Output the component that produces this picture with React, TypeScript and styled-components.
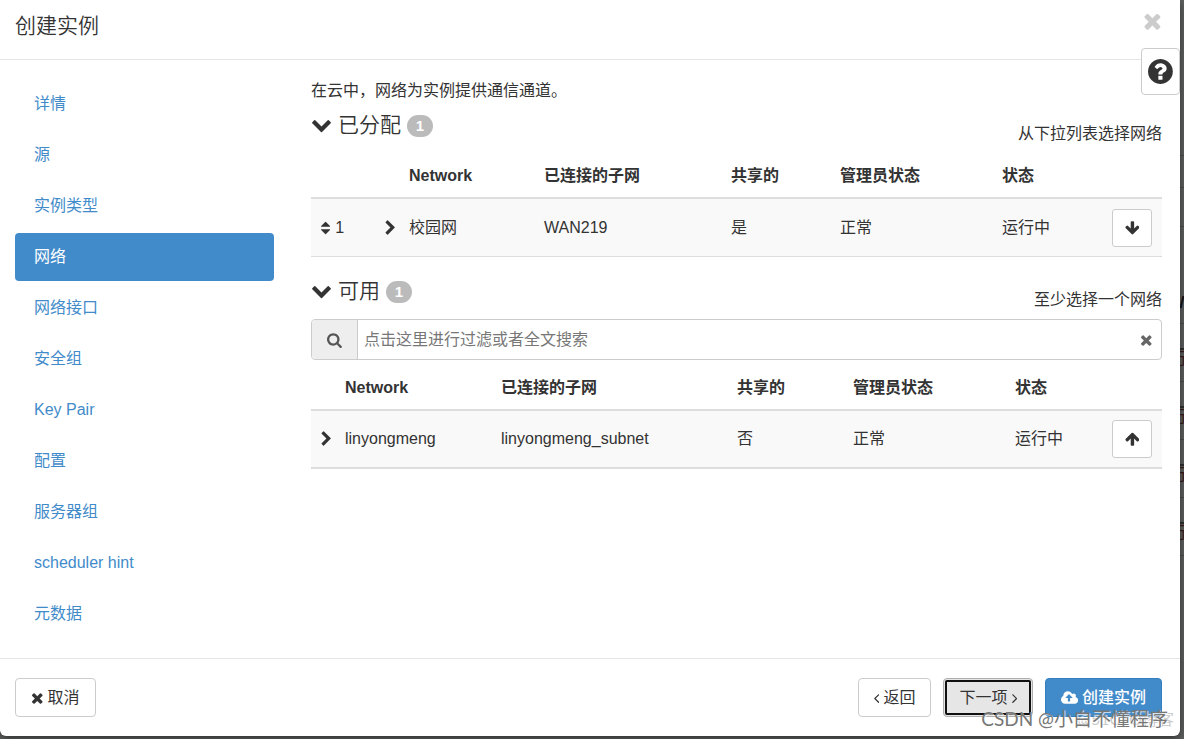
import React from "react";
import styled, { createGlobalStyle, css } from "styled-components";

const GlobalStyle = createGlobalStyle`
  *, *::before, *::after { box-sizing: border-box; }
  body {
    margin: 0;
    background: #5f6060;
    color: #333;
    font: 16px/22px "Liberation Sans", "Noto Sans CJK SC", sans-serif;
    overflow: hidden;
  }
  button, input { font: inherit; color: inherit; }
`;

/* ---------- icons ---------- */

const glyphs = {
  times: {
    box: "192 0 1408 1792",
    d: "M1490 1322q0 40-28 68l-136 136q-28 28-68 28t-68-28l-294-294-294 294q-28 28-68 28t-68-28l-136-136q-28-28-28-68t28-68l294-294-294-294q-28-28-28-68t28-68l136-136q28-28 68-28t68 28l294 294 294-294q28-28 68-28t68 28l136 136q28 28 28 68t-28 68l-294 294 294 294q28 28 28 68z",
  },
  chevronDown: {
    box: "0 96 1792 1792",
    d: "M1683 808l-742 741q-19 19-45 19t-45-19l-742-741q-19-19-19-45.500t19-45.500l166-165q19-19 45-19t45 19l531 531 531-531q19-19 45-19t45 19l166 165q19 19 19 45.500t-19 45.500z",
  },
  chevronRight: {
    box: "288 0 1120 1792",
    d: "M1363 877l-742 742q-19 19-45 19t-45-19l-166-166q-19-19-19-45t19-45l531-531-531-531q-19-19-19-45t19-45l166-166q19-19 45-19t45 19l742 742q19 19 19 45t-19 45z",
  },
  search: {
    box: "64 0 1664 1792",
    d: "M1216 832q0-185-131.500-316.500t-316.500-131.500-316.500 131.500-131.500 316.500 131.500 316.500 316.500 131.500 316.500-131.500 131.500-316.500zm512 832q0 52-38 90t-90 38q-54 0-90-38l-343-342q-179 124-399 124-143 0-273.500-55.500t-225-150-150-225-55.500-273.500 55.500-273.500 150-225 225-150 273.500-55.500 273.500 55.500 225 150 150 225 55.500 273.500q0 220-124 399l343 343q37 37 37 90z",
  },
  question: {
    box: "128 0 1536 1792",
    d: "M1024 1376v-192q0-14-9-23t-23-9h-192q-14 0-23 9t-9 23v192q0 14 9 23t23 9h192q14 0 23-9t9-23zm256-672q0-88-55.500-163t-138.500-116-170-41q-243 0-371 213-15 24 8 42l132 100q7 6 19 6 16 0 25-12 53-68 86-92 34-24 86-24 48 0 85.500 26t37.500 59q0 38-20 61t-68 45q-63 28-115.500 86.500t-52.500 125.500v36q0 14 9 23t23 9h192q14 0 23-9t9-23q0-19 21.500-49.500t54.500-49.500q32-18 49-28.500t46-35 44.500-48 28-60.500 12.500-81zm384 192q0 209-103 385.500t-279.500 279.500-385.500 103-385.500-103-279.500-279.500-103-385.500 103-385.500 279.500-279.500 385.500-103 385.500 103 279.500 279.500 103 385.500z",
  },
  arrowDown: {
    box: "64 0 1664 1792",
    d: "M1675 832q0 53-37 90l-651 652q-39 37-91 37-53 0-90-37l-651-652q-38-36-38-90 0-53 38-91l74-75q39-37 91-37 53 0 90 37l294 294v-704q0-52 38-90t90-38h128q52 0 90 38t38 90v704l294-294q37-37 90-37 52 0 91 37l75 75q37 39 37 91z",
  },
  arrowUp: {
    box: "64 0 1664 1792",
    d: "M1675 971q0 51-37 90l-75 75q-38 38-91 38-54 0-90-38l-294-293v704q0 52-37.500 84.500t-90.500 32.500h-128q-53 0-90.500-32.500t-37.500-84.500v-704l-294 293q-36 38-90 38t-90-38l-75-75q-38-38-38-90 0-53 38-91l651-651q35-37 90-37 54 0 91 37l651 651q37 39 37 91z",
  },
  sort: {
    box: "384 0 1024 1792",
    d: "M1408 1088q0 26-19 45l-448 448q-19 19-45 19t-45-19l-448-448q-19-19-19-45t19-45 45-19h896q26 0 45 19t19 45zm0-384q0 26-19 45t-45 19h-896q-26 0-45-19t-19-45 19-45l448-448q19-19 45-19t45 19l448 448q19 19 19 45z",
  },
  angleLeft: {
    box: "608 0 600 1792",
    d: "M1203 544q0 13-10 23l-393 393 393 393q10 10 10 23t-10 23l-50 50q-10 10-23 10t-23-10l-466-466q-10-10-10-23t10-23l466-466q10-10 23-10t23 10l50 50q10 10 10 23z",
  },
  angleRight: {
    box: "576 0 600 1792",
    d: "M1171 960q0 13-10 23l-466 466q-10 10-23 10t-23-10l-50-50q-10-10-10-23t10-23l393-393-393-393q-10-10-10-23t10-23l50-50q10-10 23-10t23 10l466 466q10 10 10 23z",
  },
  cloud: {
    box: "-64 0 1920 1792",
    d: "M1216 864q0-14-9-23l-352-352q-9-9-23-9t-23 9l-351 351q-10 12-10 24 0 14 9 23t23 9h224v352q0 13 9.500 22.500t22.500 9.500h192q13 0 22.500-9.500t9.500-22.500v-352h224q13 0 22.500-9.500t9.500-22.500zm640 288q0 159-112.500 271.500t-271.500 112.500h-1088q-185 0-316.500-131.500t-131.500-316.500q0-130 70-240t188-165q-2-30-2-43 0-212 150-362t362-150q156 0 285.500 87t188.500 231q71-62 166-62 106 0 181 75t75 181q0 76-41 138 130 31 213.500 135.500t83.500 238.500z",
  },
};

const Glyph = styled.svg<{ $size: number }>`
  height: ${(p) => p.$size}px;
  flex: none;
  fill: currentColor;
  vertical-align: middle;
`;

function Icon({ name, size = 16 }: { name: keyof typeof glyphs; size?: number }) {
  return (
    <Glyph $size={size} viewBox={glyphs[name].box} aria-hidden="true">
      <path d={glyphs[name].d} />
    </Glyph>
  );
}

/* ---------- page behind the dialog ---------- */

const Backdrop = styled.div`
  position: absolute;
  inset: 0;
  padding-top: 155px;
  overflow: hidden;
  display: flex;
  flex-direction: column;
  align-items: flex-end;
  color: #14141e;
`;

const BackRow = styled.div<{ $height: number }>`
  flex: none;
  width: 16px;
  height: ${(p) => p.$height}px;
  border-top: 1px solid #4d4d4d;
`;

const BackLabel = styled.b`
  display: block;
  margin: 65px 0 0 8px;
`;

const BackAction = styled.div`
  width: 16px;
  height: 22px;
  margin-top: 24px;
  padding-left: 3px;
  border-top: 2px solid #303030;
  line-height: 18px;
  color: #3c1a1a;
`;

/* ---------- dialog shell ---------- */

const Dialog = styled.section`
  position: relative;
  display: flex;
  flex-direction: column;
  min-height: calc(100vh - 3px);
  margin: 0 4px 3px 0;
  background: #fff;
  border-radius: 0 0 6px 6px;
  box-shadow: 0 3px 10px rgba(0, 0, 0, 0.5);
`;

const Header = styled.header`
  display: flex;
  justify-content: space-between;
  align-items: flex-start;
  height: 60px;
  padding: 9px 18px 0 15px;
  border-bottom: 1px solid #e5e5e5;
`;

const Title = styled.h1`
  margin: 0;
  font-size: 21px;
  line-height: 34px;
  font-weight: 350;
`;

const CloseButton = styled.button`
  display: flex;
  padding: 0;
  border: 0;
  background: none;
  color: #ccc;
`;

const HelpButton = styled.button`
  position: absolute;
  top: 48px;
  right: 0;
  display: flex;
  align-items: center;
  justify-content: center;
  width: 39px;
  height: 47px;
  padding: 0;
  border: 1px solid #ccc;
  border-radius: 4px;
  background: #fff;
`;

const Body = styled.div`
  flex: 1;
  display: grid;
  grid-template-columns: 259px minmax(0, 1fr);
  column-gap: 37px;
  padding: 20px 18px 20px 15px;
`;

const Steps = styled.nav`
  display: flex;
  flex-direction: column;
  gap: 3px;
`;

const Step = styled.a<{ $active?: boolean }>`
  padding: 13px 19px;
  border-radius: 4px;
  color: #428bca;
  text-decoration: none;
  ${(p) => p.$active && css`background: #428bca; color: #fff;`}
`;

/* ---------- network tables ---------- */

const Intro = styled.p`
  margin: 0 0 8px;
`;

const Section = styled.section`
  margin-bottom: 19px;
`;

const SectionHead = styled.div`
  display: flex;
  justify-content: space-between;
  align-items: flex-end;
  height: 35px;
  margin-bottom: 8px;
`;

const SectionTitle = styled.h2`
  display: flex;
  align-items: center;
  align-self: flex-start;
  gap: 6px;
  margin: 0;
  font-size: 21px;
  line-height: 30px;
  font-weight: 350;
`;

const Badge = styled.span`
  width: 26px;
  margin-top: 2px;
  border-radius: 11px;
  background: #bbb;
  color: #fff;
  font-size: 15px;
  line-height: 22px;
  font-weight: 700;
  text-align: center;
`;

const Table = styled.table`
  width: 100%;
  table-layout: fixed;
  border-spacing: 0;
  text-align: left;
`;

const Col = styled.col<{ $width?: number }>`
  width: ${(p) => (p.$width ? `${p.$width}px` : "auto")};
`;

const Th = styled.th`
  padding: 12px 0 10px 10px;
  border-bottom: 2px solid #ddd;
  font-weight: 700;
  white-space: nowrap;
`;

const Td = styled.td<{ $line: number }>`
  height: 58px;
  padding: 0 0 0 10px;
  border-bottom: ${(p) => p.$line}px solid #ddd;
  background: #f9f9f9;
  white-space: nowrap;
`;

const Order = styled.span`
  display: flex;
  align-items: center;
  gap: 5px;
`;

const ToggleButton = styled.button`
  display: flex;
  padding: 0;
  border: 0;
  background: none;
`;

const MoveButton = styled.button`
  display: flex;
  align-items: center;
  justify-content: center;
  width: 40px;
  height: 38px;
  padding: 0;
  border: 1px solid #ccc;
  border-radius: 3px;
  background: #fff;
`;

const SearchBar = styled.div`
  display: flex;
  height: 41px;
  margin-bottom: 5px;
  border: 1px solid #ccc;
  border-radius: 4px;
  overflow: hidden;
`;

const SearchLabel = styled.label`
  display: flex;
  align-items: center;
  justify-content: center;
  width: 46px;
  border-right: 1px solid #ccc;
  background: #eee;
  color: #555;
`;

const SearchInput = styled.input`
  flex: 1;
  min-width: 0;
  padding: 0 6px;
  border: 0;
  outline: 0;
  background: none;
  &::placeholder { color: #777; opacity: 1; }
`;

const ClearButton = styled.button`
  padding: 0 8px;
  border: 0;
  background: none;
  color: #666;
`;

type NetworkRow = {
  order?: number;
  name: string;
  subnet: string;
  shared: string;
  admin: string;
  status: string;
};

function NetworkTable({ row, widths, move, line }: {
  row: NetworkRow;
  widths: number[];
  move: "arrowDown" | "arrowUp";
  line: number;
}) {
  return (
    <Table>
      <colgroup>
        {row.order && <Col $width={64} />}
        <Col $width={24} />
        {widths.map((w, i) => <Col key={i} $width={w} />)}
        <Col />
        <Col $width={60} />
      </colgroup>
      <thead>
        <tr>
          {row.order && <Th />}
          <Th />
          <Th>Network</Th>
          <Th>已连接的子网</Th>
          <Th>共享的</Th>
          <Th>管理员状态</Th>
          <Th>状态</Th>
          <Th />
        </tr>
      </thead>
      <tbody>
        <tr>
          {row.order && <Td $line={line}><Order><Icon name="sort" />{row.order}</Order></Td>}
          <Td $line={line}>
            <ToggleButton aria-label="展开"><Icon name="chevronRight" /></ToggleButton>
          </Td>
          <Td $line={line}>{row.name}</Td>
          <Td $line={line}>{row.subnet}</Td>
          <Td $line={line}>{row.shared}</Td>
          <Td $line={line}>{row.admin}</Td>
          <Td $line={line}>{row.status}</Td>
          <Td $line={line}>
            <MoveButton aria-label={move === "arrowDown" ? "移除" : "分配"}><Icon name={move} /></MoveButton>
          </Td>
        </tr>
      </tbody>
    </Table>
  );
}

/* ---------- footer ---------- */

const Footer = styled.footer`
  display: flex;
  gap: 12px;
  padding: 19px 18px 19px 15px;
  border-top: 1px solid #e5e5e5;
`;

const Spacer = styled.div`
  flex: 1;
`;

const Button = styled.button<{ $kind?: "primary" | "focused" }>`
  display: flex;
  align-items: center;
  justify-content: center;
  gap: 4px;
  height: 39px;
  padding: 0 15px;
  border: 1px solid #ccc;
  border-radius: 4px;
  background: #fff;
  white-space: nowrap;
  ${(p) => p.$kind === "primary" && css`
    border-color: #357ebd;
    background: #428bca;
    color: #fff;
    font-weight: 500;
  `}
  ${(p) => p.$kind === "focused" && css`
    border-color: #adadad;
    background: #e6e6e6;
    outline: 2px solid #101010;
    outline-offset: -4px;
  `}
`;

const Watermark = styled.div`
  position: absolute;
  right: 12px;
  bottom: 3px;
  color: #777;
  font: 400 19px/28px Lato, "Noto Sans CJK SC", sans-serif;
  text-shadow: 1px 1px 0 rgba(255, 255, 255, 0.7);
  white-space: nowrap;
  pointer-events: none;
`;

const FaintMark = styled(Watermark)`
  right: 6px;
  color: rgba(150, 150, 150, 0.5);
  font-size: 16px;
`;

const steps = ["详情", "源", "实例类型", "网络", "网络接口", "安全组", "Key Pair", "配置", "服务器组", "scheduler hint", "元数据"];

export default function App() {
  return (
    <>
      <GlobalStyle />
      <Backdrop aria-hidden="true">
        <BackRow $height={32} />
        <BackRow $height={39} />
        <BackRow $height={97}><BackLabel>W</BackLabel></BackRow>
        {[0, 1, 2, 3].map((n) => (
          <BackRow key={n} $height={58}><BackAction>行</BackAction></BackRow>
        ))}
        <BackRow $height={1} />
      </Backdrop>
      <Dialog role="dialog" aria-labelledby="dialog-title">
        <Header>
          <Title id="dialog-title">创建实例</Title>
          <CloseButton aria-label="关闭"><Icon name="times" size={24} /></CloseButton>
        </Header>
        <HelpButton aria-label="帮助"><Icon name="question" size={29} /></HelpButton>
        <Body>
          <Steps>
            {steps.map((s) => (
              <Step key={s} href="#" $active={s === "网络"}>{s}</Step>
            ))}
          </Steps>
          <main>
            <Intro>在云中，网络为实例提供通信通道。</Intro>
            <Section>
              <SectionHead>
                <SectionTitle><Icon name="chevronDown" size={21} />已分配<Badge>1</Badge></SectionTitle>
                <span>从下拉列表选择网络</span>
              </SectionHead>
              <NetworkTable
                row={{ order: 1, name: "校园网", subnet: "WAN219", shared: "是", admin: "正常", status: "运行中" }}
                widths={[135, 187, 109, 162]}
                move="arrowDown"
                line={1}
              />
            </Section>
            <Section>
              <SectionHead>
                <SectionTitle><Icon name="chevronDown" size={21} />可用<Badge>1</Badge></SectionTitle>
                <span>至少选择一个网络</span>
              </SectionHead>
              <SearchBar>
                <SearchLabel htmlFor="filter" aria-label="搜索"><Icon name="search" /></SearchLabel>
                <SearchInput id="filter" placeholder="点击这里进行过滤或者全文搜索" />
                <ClearButton aria-label="清除"><Icon name="times" /></ClearButton>
              </SearchBar>
              <NetworkTable
                row={{ name: "linyongmeng", subnet: "linyongmeng_subnet", shared: "否", admin: "正常", status: "运行中" }}
                widths={[156, 236, 116, 162]}
                move="arrowUp"
                line={2}
              />
            </Section>
          </main>
        </Body>
        <Footer>
          <Button><Icon name="times" />取消</Button>
          <Spacer />
          <Button><Icon name="angleLeft" />返回</Button>
          <Button $kind="focused">下一项<Icon name="angleRight" /></Button>
          <Button $kind="primary"><Icon name="cloud" />创建实例</Button>
        </Footer>
        <FaintMark>@51CTO博客</FaintMark>
        <Watermark>CSDN @小白不懂程序</Watermark>
      </Dialog>
    </>
  );
}
